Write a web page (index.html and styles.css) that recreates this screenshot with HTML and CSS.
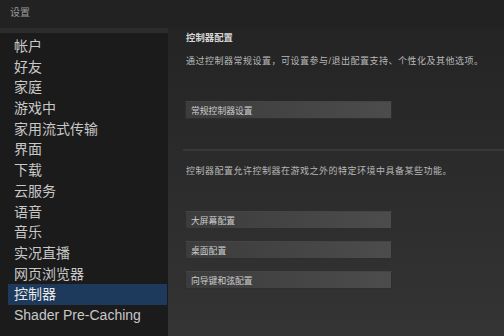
FILE: index.html
```html
<!DOCTYPE html>
<html>

<head>
  <title>设置</title>
  <link rel="stylesheet" href="styles.css">
</head>

<body>
  <div class="titlebar">设置</div>

  <div class="layout">
    <div class="sidebar">
      <div class="sidebar-strip"></div>
      <div class="nav">
        <a href="#">帐户</a>
        <a href="#">好友</a>
        <a href="#">家庭</a>
        <a href="#">游戏中</a>
        <a href="#">家用流式传输</a>
        <a href="#">界面</a>
        <a href="#">下载</a>
        <a href="#">云服务</a>
        <a href="#">语音</a>
        <a href="#">音乐</a>
        <a href="#">实况直播</a>
        <a href="#">网页浏览器</a>
        <a href="#" class="active">控制器</a>
        <a href="#">Shader Pre-Caching</a>
      </div>
    </div>

    <div class="main-content">
      <h2>控制器配置</h2>
      <p class="desc">通过控制器常规设置，可设置参与/退出配置支持、个性化及其他选项。</p>
      <button class="cfg-btn first">常规控制器设置</button>

      <div class="separator"></div>

      <p class="desc desc-2">控制器配置允许控制器在游戏之外的特定环境中具备某些功能。</p>
      <button class="cfg-btn first">大屏幕配置</button>
      <button class="cfg-btn">桌面配置</button>
      <button class="cfg-btn">向导键和弦配置</button>
    </div>
  </div>
</body>

</html>
```

FILE: styles.css
```css
* {
  font-family: "Liberation Sans", "Noto Sans CJK SC", sans-serif;
  box-sizing: border-box;
}

body {
  margin: 0;
  width: 504px;
  height: 336px;
  overflow: hidden;
  background-color: #222222;
}

.titlebar {
  height: 28px;
  padding-left: 10px;
  line-height: 26px;
  font-size: 10px;
  color: #9a9a9a;
  background-color: #222222;
}

.layout {
  display: flex;
  height: 308px;
}

.sidebar {
  width: 168px;
  flex-shrink: 0;
  background-color: #1e1e1e;
}

.sidebar-strip {
  height: 5px;
  background-color: #2c2c2c;
}

.nav {
  display: flex;
  flex-direction: column;
  padding-top: 3px;
  padding-left: 8px;
  padding-right: 1px;
  background-color: #1b1b1b;
  height: 303px;
}

.nav a {
  height: 20.7px;
  line-height: 20.7px;
  padding-left: 6px;
  font-size: 14px;
  color: #c8c8c8;
  text-decoration: none;
  white-space: nowrap;
}

.nav a.active {
  background-color: #1d3a5c;
  color: #e8e8e8;
}

.main-content {
  flex-grow: 1;
  padding-left: 17px;
  background: linear-gradient(to bottom, #242424, #343434);
  display: flex;
  flex-direction: column;
  align-items: flex-start;
}

h2 {
  margin: 4px 0 0 1px;
  height: 12px;
  line-height: 12px;
  font-size: 9.4px;
  font-weight: bold;
  color: #d8d8d8;
}

.desc {
  margin: 11px 0 0 1px;
  height: 12px;
  line-height: 12px;
  font-size: 9px;
  letter-spacing: 0.5px;
  color: #b8b8b8;
}

.desc-2 {
  margin-top: 14px;
}

.cfg-btn {
  width: 207px;
  height: 18px;
  margin-top: 12px;
  padding: 0 0 0 5px;
  text-align: left;
  font-size: 8.8px;
  color: #cccccc;
  border: 1px solid #2e2e2e;
  border-top-color: #444444;
  background: linear-gradient(to right, #3c3c3c, #4c4c4c);
  cursor: pointer;
}

.cfg-btn.first {
  margin-top: 34px;
}

.separator {
  width: calc(100% + 2px);
  margin-left: -2px;
  margin-top: 30px;
  height: 2px;
  background-color: #383838;
}
```
